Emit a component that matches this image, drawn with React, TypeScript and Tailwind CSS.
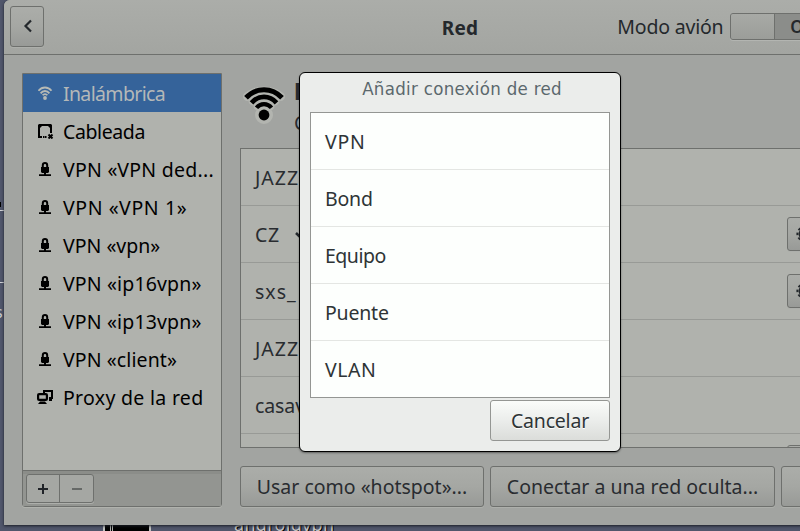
import React from "react";

function WifiSmall() {
  return (
    <svg width="16" height="16" viewBox="0 0 16 16" className="block" fill="none" stroke="#b7bab5" strokeWidth="1.800">
      <path d="M0.500 5.800C4 1.400 10 1.400 13.500 5.800" />
      <path d="M2.600 8.400C5 5.200 9 5.200 11.400 8.400" />
      <path d="M4.600 10.300C6 8.600 8 8.600 9.400 10.300" />
      <circle cx="7" cy="13" r="1.900" fill="#b7bab5" stroke="none" />
    </svg>
  );
}

function WiredIcon() {
  return (
    <svg width="16" height="16" viewBox="0 0 16 16" className="block">
      <path d="M1 1H13L14 2V10H12V5L10 3H4L2 5V13H4V15H0V2Z" fill="#000" />
      <path d="M5 13H6.500V15H5ZM7 13H8.500V15H7Z" fill="#000" />
      <path d="M10.500 11.500L14.500 15.500M14.500 11.500L10.500 15.500" stroke="#000" strokeWidth="2" />
    </svg>
  );
}

function VpnIcon() {
  return (
    <svg width="16" height="16" viewBox="0 0 16 16" className="block">
      <path d="M4.800 7V4.200C4.800 1.200 9.200 1.200 9.200 4.200V7" fill="none" stroke="#000" strokeWidth="2" />
      <path d="M3 6H11V11L10 12H8V13.200H13V15H1V13.200H6V12H4L3 11Z" fill="#000" />
    </svg>
  );
}

function ProxyIcon() {
  return (
    <svg width="17" height="16" viewBox="0 0 17 16" className="-ml-px block">
      <path d="M7 4V2H15V9H12" fill="none" stroke="#000" strokeWidth="2" />
      <path d="M12 10H15V12H12Z" fill="#000" />
      <rect x="1.100" y="5.100" width="8.800" height="5.800" rx="1" fill="none" stroke="#000" strokeWidth="2.200" />
      <path d="M3 12.500H8L10 15H1Z" fill="#000" />
    </svg>
  );
}

function WifiLarge() {
  return (
    <svg width="48" height="48" viewBox="0 0 48 48" className="block shrink-0">
      <g fill="none" stroke="#b3b5b0" strokeWidth="9" strokeLinecap="round" strokeLinejoin="round">
        <path d="M7.500 16.500C17 9 31 9 40.500 16.500" />
        <path d="M13 21C20 16 28 16 35 21M18 26C22 23.500 26 23.500 30 26" />
        <circle cx="24" cy="35" r="4.500" />
      </g>
      <g fill="none" stroke="#000" strokeLinecap="butt">
        <path d="M6 17.800C16 7 32 7 42 17.800" strokeWidth="5" />
        <path d="M11.500 22.800C18.500 15 29.500 15 36.500 22.800" strokeWidth="4.800" />
        <path d="M16.500 27.800C20.500 22.800 27.500 22.800 31.500 27.800" strokeWidth="4.200" />
      </g>
      <circle cx="24" cy="35" r="5.400" fill="#000" />
    </svg>
  );
}

const sidebar = [
  { label: "Inalámbrica", icon: <WifiSmall />, track: "tracking-[-0.65px]" },
  { label: "Cableada", icon: <WiredIcon />, track: "tracking-[-0.4px]" },
  { label: "VPN «VPN ded...", icon: <VpnIcon />, track: "tracking-[0.25px]" },
  { label: "VPN «VPN 1»", icon: <VpnIcon />, track: "tracking-[0.6px]" },
  { label: "VPN «vpn»", icon: <VpnIcon />, track: "tracking-[0px]" },
  { label: "VPN «ip16vpn»", icon: <VpnIcon />, track: "tracking-[0.15px]" },
  { label: "VPN «ip13vpn»", icon: <VpnIcon />, track: "tracking-[0.15px]" },
  { label: "VPN «client»", icon: <VpnIcon />, track: "tracking-[0.1px]" },
  { label: "Proxy de la red", icon: <ProxyIcon />, track: "tracking-[0.3px]" },
];

const networks = [
  { name: "JAZZ", track: "tracking-[1px]", gear: false, check: false },
  { name: "CZ", track: "tracking-[0.7px]", gear: true, check: true },
  { name: "sxs_", track: "tracking-[1px]", gear: true, check: false },
  { name: "JAZZ", track: "tracking-[1px]", gear: false, check: false },
  { name: "casav", track: "tracking-[-0.1px]", gear: false, check: false },
  { name: "", track: "", gear: true, check: false },
];

const kinds = [
  { label: "VPN", track: "tracking-[0.7px]" },
  { label: "Bond", track: "tracking-[-0.2px]" },
  { label: "Equipo", track: "tracking-[-0.5px]" },
  { label: "Puente", track: "tracking-[-0.2px]" },
  { label: "VLAN", track: "tracking-[0.5px]" },
];

const darkButton =
  "flex items-center justify-center whitespace-nowrap rounded-[3px] border border-[#6e706d] bg-linear-to-b from-[#abada9] via-[#a5a7a3] to-[#989a97] shadow-[0_1px_0_#adafab]";

function Header() {
  return (
    <header className="grid h-[55px] w-full grid-cols-[1fr_auto_1fr] items-center rounded-tl-[6px] border-b border-[#6e706d] bg-linear-to-b from-[#abada9] to-[#a3a5a1] text-[#24282c]">
      <div className={"mb-[2px] ml-[6px] h-[41px] w-[34px] " + darkButton}>
        <svg width="10" height="14" viewBox="0 0 10 14" className="ml-[2px]">
          <path d="M8 1.500L2.500 7L8 12.500" fill="none" stroke="#24282c" strokeWidth="2.200" />
        </svg>
      </div>
      <h1 className="pt-[2px] text-[19px] font-bold tracking-[0.3px]">Red</h1>
      <div className="flex items-center pb-[2px] pl-[139px]">
        <span className="w-[113px] whitespace-nowrap tracking-[-0.2px]">Modo avión</span>
        <div className="flex h-[27px] w-[110px] shrink-0 rounded-[3px] border border-[#6e706d] bg-[#8b8d8a] shadow-[0_1px_0_#b3b5b1]">
          <div className="w-[44px] rounded-l-[2px] border-r border-[#6e706d] bg-linear-to-b from-[#a8aaa6] to-[#9b9d99]" />
          <div className="flex flex-1 items-center pl-[15px] text-[17px] font-semibold">OFF</div>
        </div>
      </div>
    </header>
  );
}

function Sidebar() {
  return (
    <aside className="flex h-[434px] w-[200px] shrink-0 flex-col rounded-b-[3px] border border-[#6e706d] bg-[#b0b2ad] shadow-[0_1px_0_#b0b2ad]">
      <ul className="h-[396px]">
        {sidebar.map((item, i) => (
          <li
            key={item.label}
            className={
              "flex h-[38px] items-center gap-[9px] pl-[15px] " + item.track + (i === 0 ? " bg-[#35639a] text-[#b4b8b8]" : " text-black")
            }
          >
            <span className="w-[16px] shrink-0">{item.icon}</span>
            <span className="whitespace-nowrap">{item.label}</span>
          </li>
        ))}
      </ul>
      <div className="flex flex-1 items-start border-t border-[#6e706d] bg-[#939591] pl-[3px] pt-[3px] shadow-[inset_0_3px_0_#8b8d89]">
        <div className="flex h-[29px] w-[68px] rounded-[3px] border border-[#6e706d] bg-[#a5a7a3] shadow-[0_1px_0_#adafab]">
          <div className="flex w-[33px] items-center justify-center border-r border-[#6e706d]">
            <svg width="10" height="10" viewBox="0 0 10 10"><path d="M0 5H10M5 0V10" stroke="#202328" strokeWidth="2" /></svg>
          </div>
          <div className="flex flex-1 items-center justify-center">
            <svg width="10" height="10" viewBox="0 0 10 10"><path d="M0 5H10" stroke="#666967" strokeWidth="2" /></svg>
          </div>
        </div>
      </div>
    </aside>
  );
}

function Gear() {
  return (
    <svg width="16" height="16" viewBox="0 0 16 16" fill="none" stroke="#24282c">
      <circle cx="8" cy="8" r="4.200" strokeWidth="2.600" />
      <circle cx="8" cy="8" r="6.600" strokeWidth="2" strokeDasharray="2.600 2.580" strokeDashoffset="1.300" />
    </svg>
  );
}

function Networks() {
  return (
    <section className="flex w-[652px] shrink-0 flex-col text-[#292c30]">
      <div className="flex h-[75px] w-full pt-[7px]">
        <WifiLarge />
        <div className="ml-[6px] flex flex-col">
          <span className="font-[family-name:Roboto,sans-serif] text-[24px] leading-[25px] font-bold">Inalámbrica</span>
          <span className="leading-[35px]">Conectado</span>
        </div>
      </div>
      <ul className="h-[300px] overflow-hidden border border-[#6e706d] bg-[#b0b2ad]">
        {networks.map((n, i) => (
          <li key={i} className="flex h-[57px] items-center border-b border-[#989a96] pl-[14px]">
            <span className={"whitespace-nowrap " + n.track}>{n.name}</span>
            {n.check && (
              <svg width="14" height="14" viewBox="0 0 14 14" className="ml-[15px]">
                <path d="M1 6L5 10L13 1" fill="none" stroke="#24282c" strokeWidth="2.500" />
              </svg>
            )}
            {n.gear && <div className={"mr-[70px] ml-auto h-[34px] w-[34px] " + darkButton}><Gear /></div>}
          </li>
        ))}
      </ul>
      <div className="mt-[18px] flex gap-[6px]">
        <div className={"h-[41px] w-[244px] " + darkButton}>Usar como «hotspot»...</div>
        <div className={"h-[41px] w-[285px] " + darkButton}>Conectar a una red oculta...</div>
        <div className={"h-[41px] w-[111px] " + darkButton} />
      </div>
    </section>
  );
}

function Dialog() {
  return (
    <div className="absolute top-[72px] left-[299px] flex h-[380px] w-[322px] flex-col rounded-[6px] border border-black bg-[#ebedeb] px-[10px] text-[#2e3436] shadow-[0_1px_2px_rgba(0,0,0,0.4)]">
      <h2 className="h-[39px] pt-[3px] pl-[4px] text-center font-[family-name:DejaVu_Sans,sans-serif] font-stretch-condensed text-[18.5px] leading-[25px] tracking-[0.3px] whitespace-nowrap text-[#5b686d]">
        Añadir conexión de red
      </h2>
      <ul className="h-[286px] border border-[#949693] bg-[#fdfffd]">
        {kinds.map((k) => (
          <li
            key={k.label}
            className={"flex h-[57px] items-center border-b border-[#e4e6e3] pl-[14px] last:border-b-0 " + k.track}
          >
            {k.label}
          </li>
        ))}
      </ul>
      <div className="mt-[2px] flex h-[41px] w-[120px] items-center justify-center self-end rounded-[3px] border border-[#949693] bg-linear-to-b from-[#fafcfa] via-[#ebedeb] to-[#dbddda] tracking-[-0.2px] [text-shadow:0_1px_0_white]">
        Cancelar
      </div>
    </div>
  );
}

export default function App() {
  return (
    <div className="relative h-[531px] w-[800px] overflow-hidden bg-[#50566b] font-['Noto_Sans',sans-serif] text-[19.5px] leading-[27px]">
      <div className="absolute top-[190px] left-[-5px] h-[140px] w-[12px] overflow-hidden text-[#c9cbd1]">
        <div className="mt-[12px] h-[5px] w-[6px] bg-black" />
        <div className="mt-[3px] h-px w-[12px] bg-[#d2d3d8]" />
        <div className="mt-[71px] h-px w-[12px] bg-[#d2d3d8]" />
        <div className="mt-[18px] text-[16px] leading-[22px]">s</div>
      </div>
      <div className="absolute top-[514px] left-[103px] h-[17px] w-[48px] border-x-2 border-[#c0c2c0] bg-black">
        <div className="ml-[5px] h-full w-[3px] border-x border-[#b0b2b0]" />
      </div>
      <div className="absolute top-[511px] left-[234px] text-[18px] tracking-[0.3px] text-[#c3c4c5] [text-shadow:1px_1px_0_black]">
        androidvpn
      </div>
      <div className="relative ml-[4px] h-[525px] w-[912px] rounded-tl-[6px] bg-[#a2a4a1] shadow-[0_1px_3px_#1a1d25]">
        <Header />
        <main className="flex gap-[18px] pt-[18px] pl-[18px]">
          <Sidebar />
          <Networks />
        </main>
      </div>
      <Dialog />
    </div>
  );
}
